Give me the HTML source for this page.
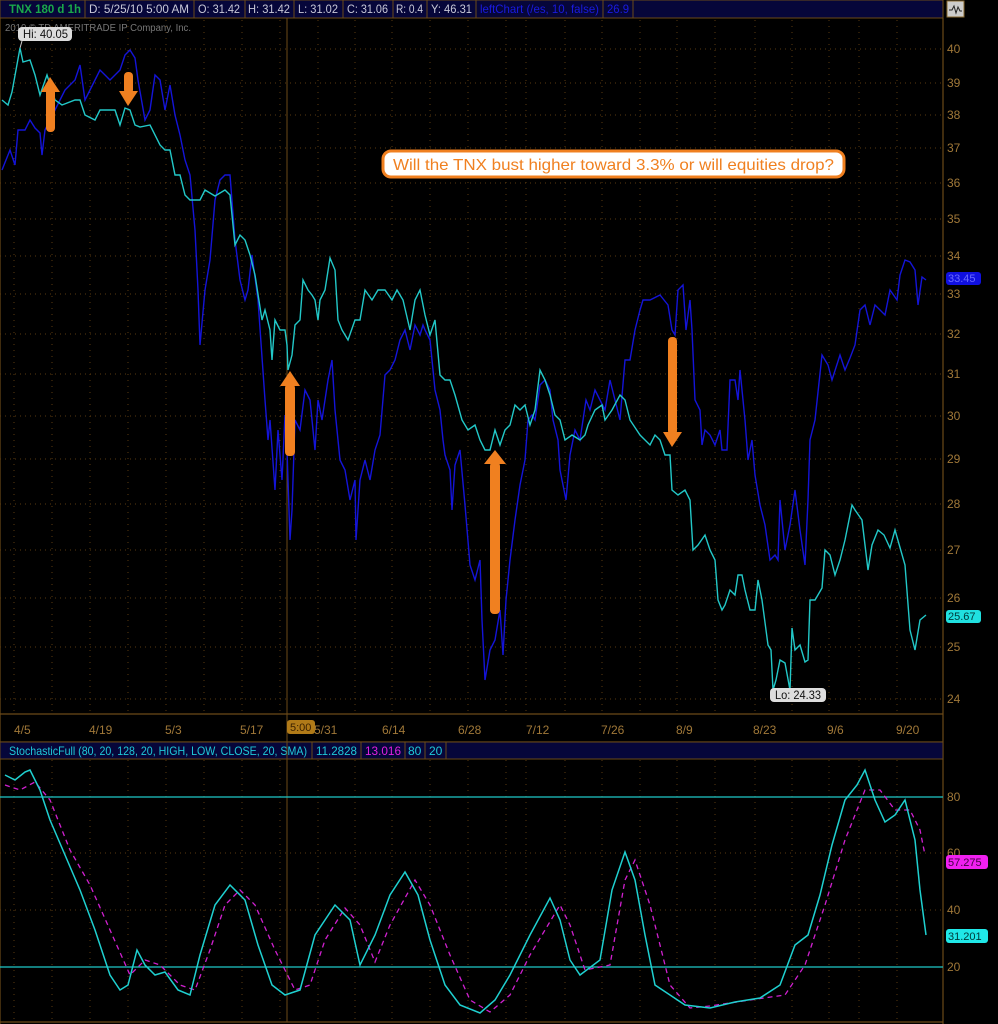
<!DOCTYPE html>
<html><head><meta charset="utf-8"><style>
html,body{margin:0;padding:0;background:#000;width:998px;height:1024px;overflow:hidden}
svg{display:block}
text{font-family:"Liberation Sans",sans-serif}
</style></head><body>
<svg width="998" height="1024" viewBox="0 0 998 1024" xmlns="http://www.w3.org/2000/svg">
<rect width="998" height="1024" fill="#000"/>
<!-- header bar -->
<rect x="0" y="0" width="943" height="18" fill="#06063a" stroke="#6b4a18" stroke-width="1"/>
<g stroke="#6b4a18" stroke-width="1">
<line x1="85" y1="0" x2="85" y2="18"/><line x1="194" y1="0" x2="194" y2="18"/><line x1="245" y1="0" x2="245" y2="18"/>
<line x1="294" y1="0" x2="294" y2="18"/><line x1="343" y1="0" x2="343" y2="18"/><line x1="393" y1="0" x2="393" y2="18"/>
<line x1="427" y1="0" x2="427" y2="18"/><line x1="476" y1="0" x2="476" y2="18"/><line x1="603" y1="0" x2="603" y2="18"/><line x1="633" y1="0" x2="633" y2="18"/>
</g>
<text x="9" y="13" font-size="12" fill="#1aa84a" font-weight="bold" textLength="72" lengthAdjust="spacingAndGlyphs">TNX 180 d 1h</text>
<g font-size="12" fill="#c8c8d8">
<text x="89" y="13" textLength="100" lengthAdjust="spacingAndGlyphs">D: 5/25/10 5:00 AM</text><text x="198" y="13" textLength="42" lengthAdjust="spacingAndGlyphs">O: 31.42</text><text x="248" y="13" textLength="42" lengthAdjust="spacingAndGlyphs">H: 31.42</text>
<text x="298" y="13" textLength="40" lengthAdjust="spacingAndGlyphs">L: 31.02</text><text x="347" y="13" textLength="41" lengthAdjust="spacingAndGlyphs">C: 31.06</text><text x="396" y="13" textLength="27" lengthAdjust="spacingAndGlyphs">R: 0.4</text><text x="431" y="13" textLength="41" lengthAdjust="spacingAndGlyphs">Y: 46.31</text>
</g>
<text x="480" y="13" font-size="12" fill="#1a1adf" textLength="119" lengthAdjust="spacingAndGlyphs">leftChart (/es, 10, false)</text>
<text x="607" y="13" font-size="12" fill="#1a1adf" textLength="22" lengthAdjust="spacingAndGlyphs">26.9</text>
<rect x="947" y="1" width="17" height="16" fill="#ccc" stroke="#8a6a30"/>
<path d="M949 10 L952 10 L954 6 L956 13 L958 7 L960 11 L962 11" stroke="#222" fill="none"/>
<!-- frames -->
<g stroke="#6b4a18" stroke-width="1.2" fill="none">
<line x1="943" y1="18" x2="943" y2="1024"/>
<line x1="0" y1="18" x2="0" y2="1024"/>
<line x1="0" y1="714" x2="943" y2="714"/>
<line x1="0" y1="742" x2="943" y2="742"/>
<line x1="0" y1="1022" x2="943" y2="1022"/>
</g>
<rect x="0" y="742" width="943" height="17" fill="#06063a" stroke="#6b4a18"/>
<g stroke="#6b4a18"><line x1="312" y1="742" x2="312" y2="759"/><line x1="361" y1="742" x2="361" y2="759"/><line x1="405" y1="742" x2="405" y2="759"/><line x1="425" y1="742" x2="425" y2="759"/><line x1="446" y1="742" x2="446" y2="759"/></g>
<g font-size="12"><text x="9" y="755" fill="#1fc8d8" textLength="298" lengthAdjust="spacingAndGlyphs">StochasticFull (80, 20, 128, 20, HIGH, LOW, CLOSE, 20, SMA)</text>
<text x="316" y="755" fill="#1fc8d8" textLength="41" lengthAdjust="spacingAndGlyphs">11.2828</text><text x="365" y="755" fill="#e020e0" textLength="36" lengthAdjust="spacingAndGlyphs">13.016</text>
<text x="408" y="755" fill="#1fc8d8">80</text><text x="429" y="755" fill="#1fc8d8">20</text></g>
<!-- grid -->
<g stroke="#5a3a10" stroke-width="1" stroke-dasharray="1,4">
<line x1="0" y1="49" x2="943" y2="49"/><line x1="0" y1="83" x2="943" y2="83"/><line x1="0" y1="115" x2="943" y2="115"/>
<line x1="0" y1="148" x2="943" y2="148"/><line x1="0" y1="183" x2="943" y2="183"/><line x1="0" y1="219" x2="943" y2="219"/>
<line x1="0" y1="256" x2="943" y2="256"/><line x1="0" y1="294" x2="943" y2="294"/><line x1="0" y1="334" x2="943" y2="334"/>
<line x1="0" y1="374" x2="943" y2="374"/><line x1="0" y1="416" x2="943" y2="416"/><line x1="0" y1="459" x2="943" y2="459"/>
<line x1="0" y1="504" x2="943" y2="504"/><line x1="0" y1="550" x2="943" y2="550"/><line x1="0" y1="598" x2="943" y2="598"/>
<line x1="0" y1="647" x2="943" y2="647"/><line x1="0" y1="699" x2="943" y2="699"/>
<line x1="0" y1="853" x2="943" y2="853"/><line x1="0" y1="910" x2="943" y2="910"/>
</g>
<g stroke="#5a3a10" stroke-width="1" stroke-dasharray="1,5">
<path d="M14 20V714M52 20V714M90 20V714M128 20V714M166 20V714M204 20V714M242 20V714M280 20V714M318 20V714M355 20V714M392 20V714M430 20V714M468 20V714M506 20V714M526 20V714M565 20V714M602 20V714M640 20V714M677 20V714M715 20V714M755 20V714M792 20V714M829 20V714M859 20V714M897 20V714"/>
<path d="M14 760V1022M52 760V1022M90 760V1022M128 760V1022M166 760V1022M204 760V1022M242 760V1022M280 760V1022M318 760V1022M355 760V1022M392 760V1022M430 760V1022M468 760V1022M506 760V1022M526 760V1022M565 760V1022M602 760V1022M640 760V1022M677 760V1022M715 760V1022M755 760V1022M792 760V1022M829 760V1022M859 760V1022M897 760V1022"/>
</g>
<line x1="287" y1="18" x2="287" y2="1022" stroke="#6b4a18" stroke-width="1"/>
<text x="5" y="31" font-size="10" fill="#777" textLength="186" lengthAdjust="spacingAndGlyphs">2010 © TD AMERITRADE IP Company, Inc.</text>
<!-- axis labels -->
<g font-size="12" fill="#a07838">
<text x="947" y="53">40</text><text x="947" y="87">39</text><text x="947" y="119">38</text><text x="947" y="152">37</text>
<text x="947" y="187">36</text><text x="947" y="223">35</text><text x="947" y="260">34</text><text x="947" y="298">33</text>
<text x="947" y="338">32</text><text x="947" y="378">31</text><text x="947" y="420">30</text><text x="947" y="463">29</text>
<text x="947" y="508">28</text><text x="947" y="554">27</text><text x="947" y="602">26</text><text x="947" y="651">25</text><text x="947" y="703">24</text>
<text x="947" y="801">80</text><text x="947" y="857">60</text><text x="947" y="914">40</text><text x="947" y="971">20</text>
<text x="14" y="734">4/5</text><text x="89" y="734">4/19</text><text x="165" y="734">5/3</text><text x="240" y="734">5/17</text>
<text x="314" y="734">5/31</text><text x="382" y="734">6/14</text><text x="458" y="734">6/28</text><text x="526" y="734">7/12</text>
<text x="601" y="734">7/26</text><text x="676" y="734">8/9</text><text x="753" y="734">8/23</text><text x="827" y="734">9/6</text><text x="896" y="734">9/20</text>
</g>
<rect x="287" y="720" width="28" height="14" rx="3" fill="#b07a18"/>
<text x="290" y="731" font-size="11" fill="#3a2000">5:00</text>
<!-- stoch lines -->
<line x1="0" y1="797" x2="943" y2="797" stroke="#1fc8c8" stroke-width="1.3"/>
<line x1="0" y1="967" x2="943" y2="967" stroke="#1fc8c8" stroke-width="1.3"/>
<polyline fill="none" stroke="#d020d0" stroke-width="1.3" stroke-dasharray="5,4" points="5,785 20,790 35,782 50,800 70,850 90,885 110,930 130,975 145,960 160,965 180,985 195,990 210,950 225,905 240,890 255,905 275,950 295,990 310,985 325,940 345,908 360,925 375,962 390,925 415,880 430,905 450,955 470,1000 490,1012 510,995 530,955 560,905 570,925 585,970 610,965 625,880 635,860 650,905 670,985 690,1008 710,1006 750,1000 785,995 805,965 825,905 845,840 865,790 880,790 895,810 910,810 920,830 925,855"/>
<polyline fill="none" stroke="#1fd0d0" stroke-width="1.5" points="5,775 15,780 25,772 30,770 40,790 50,820 65,855 80,890 95,930 110,975 120,990 128,985 137,950 145,965 155,975 165,972 178,990 190,995 200,955 215,905 230,885 245,900 258,945 272,985 285,995 300,990 315,935 335,905 350,920 360,965 375,935 390,895 405,872 418,895 430,940 445,985 460,1005 480,1013 495,1000 510,975 530,935 550,898 560,920 570,960 580,975 600,960 612,890 625,852 635,880 645,935 655,985 670,995 685,1005 710,1008 735,1002 760,998 780,985 795,945 808,935 820,895 832,845 845,800 857,785 865,770 875,800 885,822 895,815 905,800 915,840 920,890 926,935"/>
<!-- price lines -->
<polyline fill="none" stroke="#1414d8" stroke-width="1.4" points="2,170 10,150 15,165 18,130 25,130 30,120 35,128 40,133 42,155 45,130 55,110 60,100 65,90 75,80 80,65 85,100 95,80 100,70 105,75 110,80 115,75 120,70 125,55 130,50 135,58 138,80 145,120 150,110 155,75 160,80 165,110 170,85 175,115 180,135 185,160 190,175 195,230 198,290 200,345 205,290 210,260 215,200 220,180 225,175 230,175 235,240 240,280 245,300 248,290 252,255 258,300 265,400 268,440 270,420 275,490 278,430 282,480 285,415 287,450 290,540 292,510 295,420 300,430 305,390 310,400 315,450 318,400 322,420 328,380 332,360 335,410 340,460 345,470 350,500 355,480 356,540 360,480 365,460 370,480 375,450 380,435 385,375 390,370 395,360 400,340 405,330 410,350 415,325 420,335 423,325 425,330 430,340 435,390 440,410 443,440 445,455 450,470 452,510 455,465 460,450 465,505 470,565 475,580 480,560 482,620 485,680 490,650 495,640 500,610 503,655 506,600 510,560 515,520 520,485 525,460 528,420 532,415 535,420 540,385 545,380 550,390 553,420 558,440 560,470 566,500 570,455 575,430 580,440 586,400 590,410 595,390 600,400 605,410 610,380 615,400 620,420 625,360 630,360 635,330 640,310 643,300 650,300 660,295 668,305 672,330 675,335 678,290 683,285 686,330 690,300 692,330 695,400 700,410 702,445 705,430 710,435 715,445 720,430 722,450 727,450 730,380 735,380 738,400 740,370 745,420 748,460 752,440 755,475 760,505 765,525 770,560 775,555 778,560 780,500 785,550 790,525 795,490 800,530 805,565 808,500 810,440 815,420 822,355 828,365 832,380 840,355 845,370 850,358 855,345 860,310 865,305 870,325 875,305 880,310 885,315 890,290 897,300 900,275 905,260 910,262 915,270 918,305 922,277 926,280"/>
<polyline fill="none" stroke="#22c8c8" stroke-width="1.4" points="2,100 8,105 12,92 16,70 20,48 23,62 30,60 35,75 40,95 47,75 55,100 62,105 75,100 80,100 85,115 95,120 100,110 115,110 120,125 125,108 130,110 135,125 140,127 150,125 160,145 165,150 170,150 175,175 180,175 185,195 190,200 200,200 205,190 215,196 225,190 230,195 235,245 240,235 245,240 250,255 255,275 262,320 265,310 270,330 272,360 275,320 280,330 285,330 287,345 288,370 292,355 295,325 300,320 303,280 308,290 312,295 315,300 318,320 320,300 325,290 330,258 335,270 338,320 342,330 348,340 355,320 360,320 365,290 372,300 378,290 385,290 392,300 397,290 403,300 410,330 415,300 420,290 425,315 430,335 435,320 440,375 445,380 450,380 455,395 462,420 468,430 475,425 480,440 485,450 490,450 495,430 500,445 505,430 510,425 515,405 520,410 525,405 530,425 535,410 540,370 545,380 550,395 555,415 560,420 565,440 572,435 580,440 585,435 588,425 595,410 602,405 605,420 612,410 620,395 625,400 630,420 640,435 645,440 650,445 655,435 660,440 665,455 670,455 672,490 678,495 685,490 690,500 693,550 698,545 705,535 710,550 715,560 718,600 722,610 725,605 730,590 735,595 738,575 742,575 745,590 750,610 755,610 758,580 762,600 768,645 771,650 773,690 776,680 780,660 785,663 790,690 792,628 795,650 800,645 805,662 808,660 810,600 815,600 822,588 825,550 830,555 835,575 840,560 845,540 852,505 855,510 862,520 868,570 872,545 878,530 884,535 890,548 895,530 905,565 910,630 915,650 920,620 926,615"/>
<!-- arrows -->
<g fill="#f08020">
<rect x="46" y="88" width="9" height="44" rx="4"/><polygon points="41,92 50,77 60,92"/>
<rect x="124" y="72" width="9" height="22" rx="4"/><polygon points="119,91 128,106 138,91"/>
<rect x="285" y="384" width="10" height="72" rx="4"/><polygon points="280,386 290,371 300,386"/>
<rect x="490" y="462" width="10" height="152" rx="4"/><polygon points="484,464 495,450 506,464"/>
<rect x="668" y="337" width="9" height="98" rx="4"/><polygon points="663,432 672,447 682,432"/>
</g>
<!-- callout -->
<rect x="383" y="151" width="461" height="26" rx="8" fill="#fff" stroke="#f08020" stroke-width="3"/>
<text x="393" y="170" font-size="16" fill="#f08020" textLength="441" lengthAdjust="spacingAndGlyphs">Will the TNX bust higher toward 3.3% or will equities drop?</text>
<!-- hi/lo -->
<rect x="18" y="27" width="54" height="14" rx="4" fill="#ddd"/><text x="23" y="38" font-size="12" fill="#111" textLength="45" lengthAdjust="spacingAndGlyphs">Hi: 40.05</text>
<line x1="22" y1="41" x2="20" y2="48" stroke="#ccc"/>
<rect x="770" y="688" width="56" height="14" rx="4" fill="#ddd"/><text x="775" y="699" font-size="12" fill="#111" textLength="46" lengthAdjust="spacingAndGlyphs">Lo: 24.33</text>
<!-- value tags -->
<rect x="946" y="272" width="35" height="13" rx="3" fill="#1010e0"/><text x="948" y="282" font-size="11" fill="#6a6aff">33.45</text>
<rect x="946" y="610" width="35" height="13" rx="3" fill="#20e0e0"/><text x="948" y="620" font-size="11" fill="#003838">25.67</text>
<rect x="946" y="855" width="42" height="14" rx="3" fill="#f020f0"/><text x="948" y="866" font-size="11" fill="#400040">57.275</text>
<rect x="946" y="929" width="42" height="14" rx="3" fill="#20e8e8"/><text x="948" y="940" font-size="11" fill="#003838">31.201</text>
</svg>
</body></html>
